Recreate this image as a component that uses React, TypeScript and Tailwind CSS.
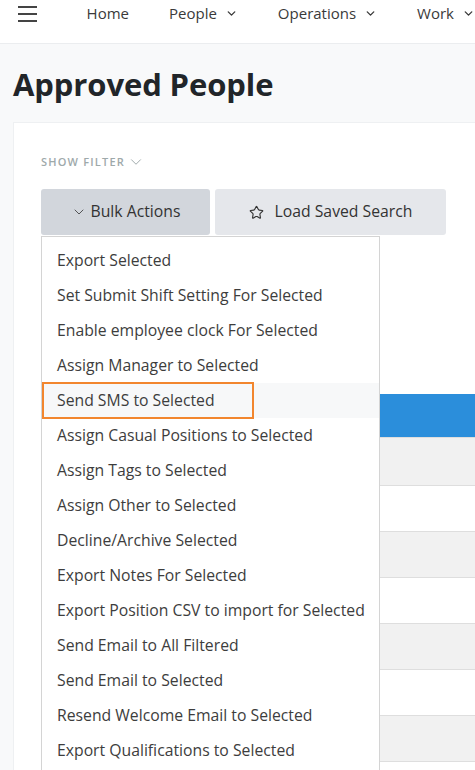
import React from 'react';
import { ChevronDown, Star } from 'lucide-react';

const navItems = [
  { label: 'Home', dropdown: false },
  { label: 'People', dropdown: true },
  { label: 'Operations', dropdown: true },
  { label: 'Work', dropdown: true },
];

const bulkActions = [
  'Export Selected',
  'Set Submit Shift Setting For Selected',
  'Enable employee clock For Selected',
  'Assign Manager to Selected',
  'Send SMS to Selected',
  'Assign Casual Positions to Selected',
  'Assign Tags to Selected',
  'Assign Other to Selected',
  'Decline/Archive Selected',
  'Export Notes For Selected',
  'Export Position CSV to import for Selected',
  'Send Email to All Filtered',
  'Send Email to Selected',
  'Resend Welcome Email to Selected',
  'Export Qualifications to Selected',
];

// index of the hovered entry in the bulk menu
const activeAction = 4;

const App: React.FC = () => {
  return (
    <div className="w-[475px] h-[770px] overflow-hidden bg-[#f8f9fa] font-['Open_Sans',sans-serif] text-[#333]">
      {/* Top Navigation */}
      <header className="h-[44px] bg-white border-b border-[#ebedef] flex items-start whitespace-nowrap">
        <button className="ml-[18px] mt-[6px] w-[20px] flex flex-col gap-[5px]">
          <span className="block h-[2px] bg-[#444]" />
          <span className="block h-[2px] bg-[#444]" />
          <span className="block h-[2px] bg-[#444]" />
        </button>
        <nav className="flex items-center ml-[50px] mt-[2px] gap-[40px] text-[15px] leading-[22px] text-[#3a3a3a]">
          {navItems.map((item) => (
            <span key={item.label} className="flex items-center gap-[8px]">
              {item.label}
              {item.dropdown && <ChevronDown className="w-[13px] h-[13px]" strokeWidth={2.5} />}
            </span>
          ))}
        </nav>
      </header>

      <main className="pl-[13px]">
        <h1 className="pt-[20px] pb-[18px] text-[31px] leading-[40px] font-bold text-[#212529] tracking-[-0.1px]">
          Approved People
        </h1>

        {/* People Card */}
        <section className="bg-white border-l border-t border-[#eef0f2] pl-[27px] pt-[30px] h-[700px]">
          <button className="flex items-center gap-[2px] text-[11px] font-semibold tracking-[1.2px] text-[#9ea9aa] uppercase">
            Show Filter
            <ChevronDown className="w-[18px] h-[18px]" strokeWidth={1.3} />
          </button>

          <div className="relative mt-[18px]">
            <div className="flex gap-[5px]">
              <button className="w-[169px] h-[46px] rounded-[3px] bg-[#d2d6dc] flex items-center justify-center gap-[4px] text-[15.75px] text-[#333]">
                <ChevronDown className="w-[16px] h-[16px]" strokeWidth={1.2} />
                Bulk Actions
              </button>
              <button className="w-[231px] h-[46px] rounded-[3px] bg-[#e5e7eb] flex items-center justify-center gap-[11px] text-[15.75px] text-[#333]">
                <Star className="w-[15px] h-[15px]" strokeWidth={1.8} />
                Load Saved Search
              </button>
            </div>

            {/* People table behind the open menu */}
            <div className="mt-[159px] text-[14px]">
              <div className="h-[43px] bg-[#2b8edb]" />
              {[0, 1, 2, 3, 4, 5, 6, 7].map((row) => (
                <div
                  key={row}
                  className={`border-t border-[#dedede] ${row === 0 ? 'h-[48px]' : 'h-[46px]'} ${
                    row % 2 === 0 ? 'bg-[#f1f1f1]' : 'bg-white'
                  }`}
                />
              ))}
            </div>

            {/* Bulk Actions menu */}
            <ul className="absolute left-0 top-[47px] w-[339px] bg-white border border-[#d4d4d4] pt-[6px] pb-[6px] text-[15.75px] text-[#3d3d3d] whitespace-nowrap">
              {bulkActions.map((action, i) => (
                <li
                  key={action}
                  className={`relative h-[35px] flex items-center pl-[15px] ${i === activeAction ? 'bg-[#f7f8f9]' : ''}`}
                >
                  {action}
                  {i === activeAction && (
                    <span className="absolute left-0 -top-[1px] w-[212px] h-[37px] border-2 border-[#f2862e]" />
                  )}
                </li>
              ))}
            </ul>
          </div>
        </section>
      </main>
    </div>
  );
};

export default App;
